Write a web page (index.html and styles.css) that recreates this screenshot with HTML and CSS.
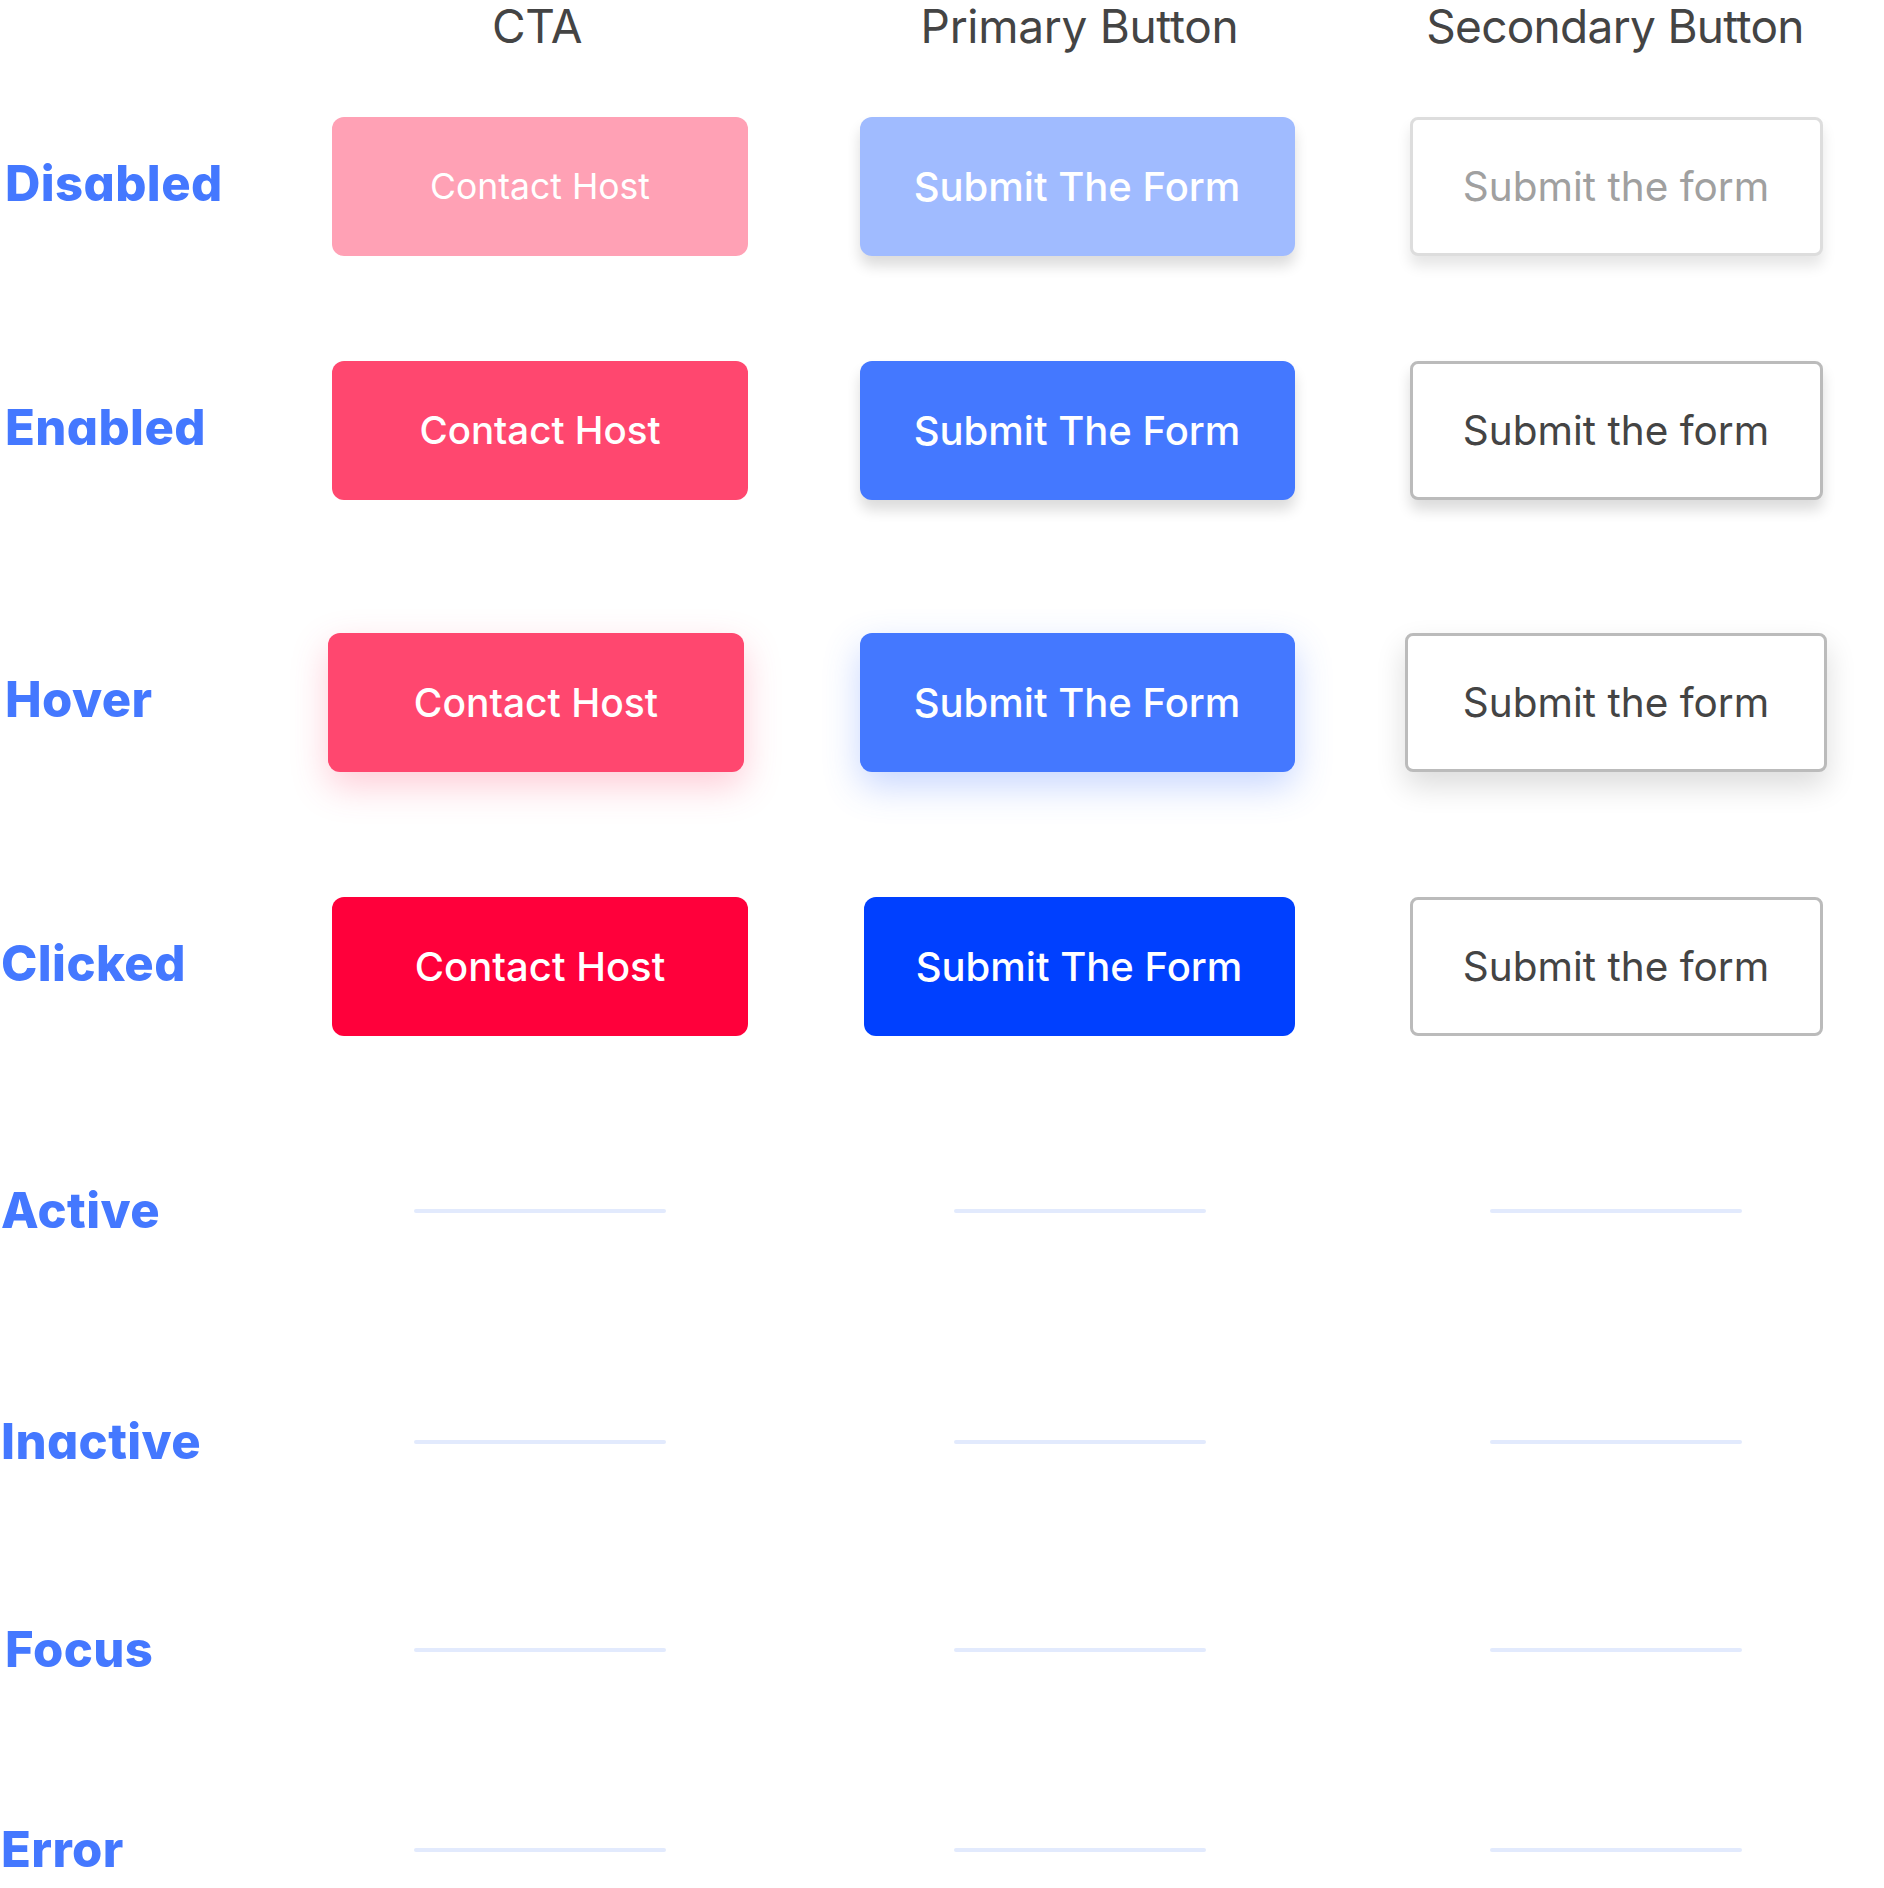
FILE: index.html
```html
<!DOCTYPE html>
<html lang="en">
<head>
<meta charset="utf-8">
<title>Button states</title>
<link rel="stylesheet" href="styles.css">
</head>
<body>
<main class="board">
  <div class="cell"></div>
  <div class="cell head head-cta">CTA</div>
  <div class="cell head head-primary">Primary Button</div>
  <div class="cell head head-secondary">Secondary Button</div>

  <div class="cell label l-disabled">Disabled</div>
  <div class="cell"><div class="btn cta cta-disabled">Contact Host</div></div>
  <div class="cell"><div class="btn primary primary-disabled">Submit The Form</div></div>
  <div class="cell"><div class="btn secondary secondary-disabled">Submit the form</div></div>

  <div class="cell label l-enabled">Enabled</div>
  <div class="cell"><div class="btn cta cta-enabled">Contact Host</div></div>
  <div class="cell"><div class="btn primary primary-enabled">Submit The Form</div></div>
  <div class="cell"><div class="btn secondary secondary-enabled">Submit the form</div></div>

  <div class="cell label l-hover">Hover</div>
  <div class="cell"><div class="btn cta cta-hover">Contact Host</div></div>
  <div class="cell"><div class="btn primary primary-hover">Submit The Form</div></div>
  <div class="cell"><div class="btn secondary secondary-hover">Submit the form</div></div>

  <div class="cell label l-clicked">Clicked</div>
  <div class="cell"><div class="btn cta cta-clicked">Contact Host</div></div>
  <div class="cell"><div class="btn primary primary-clicked">Submit The Form</div></div>
  <div class="cell"><div class="btn secondary secondary-clicked">Submit the form</div></div>

  <div class="cell label l-active">Active</div>
  <div class="cell"><div class="placeholder"></div></div>
  <div class="cell"><div class="placeholder placeholder-mid"></div></div>
  <div class="cell"><div class="placeholder"></div></div>

  <div class="cell label l-inactive">Inactive</div>
  <div class="cell"><div class="placeholder"></div></div>
  <div class="cell"><div class="placeholder placeholder-mid"></div></div>
  <div class="cell"><div class="placeholder"></div></div>

  <div class="cell label l-focus">Focus</div>
  <div class="cell"><div class="placeholder"></div></div>
  <div class="cell"><div class="placeholder placeholder-mid"></div></div>
  <div class="cell"><div class="placeholder"></div></div>

  <div class="cell label l-error">Error</div>
  <div class="cell"><div class="placeholder"></div></div>
  <div class="cell"><div class="placeholder placeholder-mid"></div></div>
  <div class="cell"><div class="placeholder"></div></div>
</main>
</body>
</html>
```

FILE: styles.css
```css
html, body {
  margin: 0;
  padding: 0;
  background: #ffffff;
}

body {
  font-family: "Inter", "Noto Sans", sans-serif;
  overflow: hidden;
}

.board {
  display: grid;
  grid-template-columns: 300px 480px 594px 484px;
  grid-template-rows: 52px 268px 220px 324px 204px 286px 176px 240px 160px;
}

.cell {
  display: flex;
  align-items: center;
  justify-content: center;
}

.head {
  font-size: 46px;
  font-weight: 400;
  color: #444444;
  letter-spacing: -0.3px;
}

.head-cta {
  padding-right: 6px;
}

.head-primary {
  padding-left: 5px;
}

.head-secondary {
  letter-spacing: -0.7px;
  padding-right: 2px;
}

.label {
  justify-content: flex-start;
  font-weight: 800;
  font-size: 49px;
  color: #4478ff;
  font-feature-settings: "cv11" 1;
  letter-spacing: 0.4px;
  padding-left: 5px;
  padding-bottom: 5px;
}

.l-clicked, .l-active, .l-inactive, .l-error {
  padding-left: 1px;
}

.l-active, .l-inactive, .l-focus, .l-error {
  padding-bottom: 2px;
}

.btn {
  box-sizing: border-box;
  display: flex;
  align-items: center;
  justify-content: center;
  height: 139px;
  font-weight: 500;
  color: #ffffff;
  white-space: nowrap;
}

.cta {
  width: 416px;
  border-radius: 12px;
  font-size: 38.5px;
}

.cta-disabled {
  background: #ffa1b5;
  font-size: 35.5px;
  font-weight: 400;
}

.cta-enabled {
  background: #ff476f;
}

.cta-hover {
  background: #ff476f;
  margin-right: 8px;
  font-size: 39px;
  box-shadow: 0 14px 36px rgba(255, 71, 111, 0.28);
}

.cta-clicked {
  background: #ff003b;
  font-size: 40px;
}

.primary {
  width: 435px;
  border-radius: 12px;
  font-size: 40px;
}

.primary-disabled {
  background: #a0bbff;
  box-shadow: 0 10px 14px rgba(0, 0, 0, 0.14);
}

.primary-enabled {
  background: #4478ff;
  box-shadow: 0 10px 14px rgba(0, 0, 0, 0.14);
}

.primary-hover {
  background: #4478ff;
  box-shadow: 0 14px 36px rgba(68, 120, 255, 0.30);
}

.primary-clicked {
  background: #0040ff;
  width: 431px;
  margin-left: 4px;
}

.secondary {
  width: 413px;
  border-radius: 8px;
  background: #ffffff;
  font-size: 40.5px;
  font-weight: 400;
  color: #444444;
  border: 3px solid #bbbbbb;
}

.secondary-disabled {
  border-color: #dddddd;
  color: #a0a0a0;
  box-shadow: 0 10px 14px rgba(0, 0, 0, 0.10);
}

.secondary-enabled {
  box-shadow: 0 10px 14px rgba(0, 0, 0, 0.14);
}

.secondary-hover {
  width: 422px;
  box-shadow: 0 14px 30px rgba(0, 0, 0, 0.14);
}

.placeholder {
  width: 252px;
  height: 4px;
  border-radius: 2px;
  background: #e2eafd;
}

.placeholder-mid {
  margin-left: 6px;
}
```
